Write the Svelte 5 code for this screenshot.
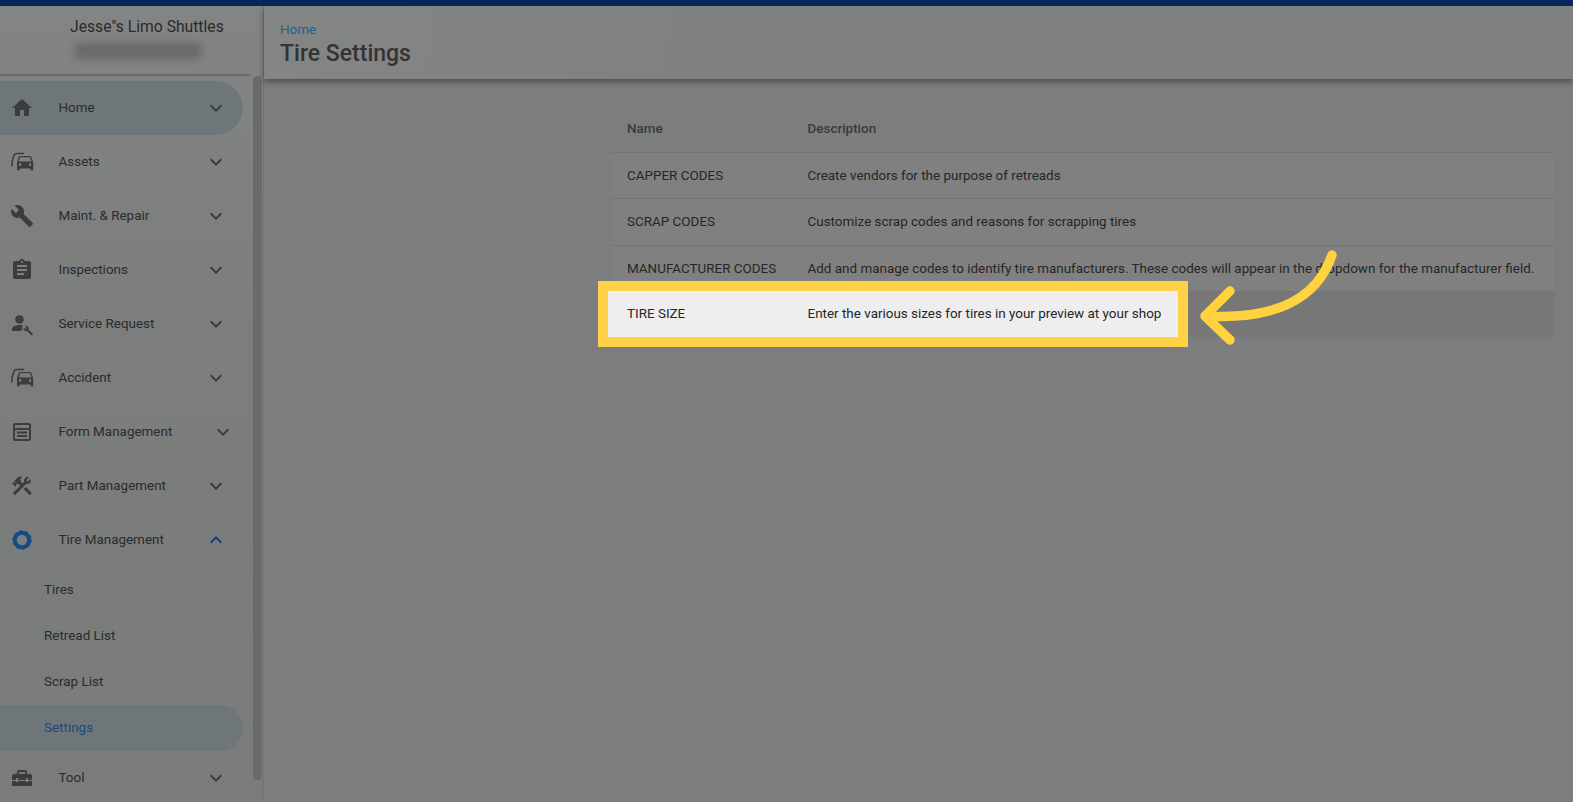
<script>
	const navTop = [
		{ label: "Home", icon: "home", active: true },
		{ label: "Assets", icon: "car" },
		{ label: "Maint. & Repair", icon: "wrench" },
		{ label: "Inspections", icon: "clipboard" },
		{ label: "Service Request", icon: "mechanic" },
		{ label: "Accident", icon: "car" },
		{ label: "Form Management", icon: "form", shifted: true },
		{ label: "Part Management", icon: "tools" }
	];
	const subItems = ["Tires", "Retread List", "Scrap List"];
	const rows = [
		["CAPPER CODES", "Create vendors for the purpose of retreads"],
		["SCRAP CODES", "Customize scrap codes and reasons for scrapping tires"],
		[
			"MANUFACTURER CODES",
			"Add and manage codes to identify tire manufacturers. These codes will appear in the dropdown for the manufacturer field."
		]
	];
</script>

{#snippet icon(name)}
	<svg class="icon" viewBox="0 0 24 24" fill="currentColor" aria-hidden="true">
		{#if name === "home"}
			<path d="M10 20v-6h4v6h5v-8h3L12 3 2 12h3v8z" />
		{:else if name === "car"}
			<g transform="translate(4.300 1.500) scale(.9)">
				<path d="M18.920 6.010C18.720 5.420 18.160 5 17.500 5h-11c-.66 0-1.210.42-1.420 1.010L3 12v8c0 .55.45 1 1 1h1c.55 0 1-.45 1-1v-1h12v1c0 .55.45 1 1 1h1c.55 0 1-.45 1-1v-8l-2.080-5.990zM6.500 16c-.83 0-1.500-.67-1.500-1.500S5.670 13 6.500 13s1.500.67 1.500 1.500S7.330 16 6.500 16zm11 0c-.83 0-1.500-.67-1.500-1.500s.67-1.500 1.500-1.500 1.500.67 1.500 1.500-.67 1.500-1.500 1.500zM5 11l1.500-4.500h11L19 11H5z" />
			</g>
			<path d="M2 16.500V12L3.500 6.500C4 4.500 5 3.500 7 3.500H14" fill="none" stroke="currentColor" stroke-width="1.500" />
		{:else if name === "wrench"}
			<path d="M22.700 19l-9.100-9.100c.9-2.300.4-5-1.500-6.900-2-2-5-2.400-7.400-1.300L9 6 6 9 1.600 4.700C.4 7.100.9 10.100 2.900 12.100c1.900 1.900 4.600 2.400 6.900 1.500l9.100 9.100c.4.4 1 .4 1.400 0l2.300-2.300c.5-.4.5-1.100.1-1.400z" />
		{:else if name === "clipboard"}
			<path d="M19 3h-4.180C14.400 1.840 13.300 1 12 1c-1.300 0-2.400.84-2.820 2H5c-1.100 0-2 .9-2 2v14c0 1.100.9 2 2 2h14c1.100 0 2-.9 2-2V5c0-1.100-.9-2-2-2zm-7 0c.55 0 1 .45 1 1s-.45 1-1 1-1-.45-1-1 .45-1 1-1zm2 14H7v-2h7v2zm3-4H7v-2h10v2zm0-4H7V7h10v2z" />
		{:else if name === "mechanic"}
			<circle cx="9.500" cy="7.500" r="4.300" />
			<path d="M2 19v-2c0-2.800 4.500-4 8-4 1 0 2 .1 3 .3-.9 1-1.300 2.600-.8 4.200l-1.500 1.500z" />
			<path d="M22.800 21.700l-4.200-4.200c.3-1 .1-2.100-.7-2.900-.8-.8-2-1-3-.6l1.800 1.800-1.300 1.300-1.800-1.800c-.4 1-.2 2.200.6 3 .8.800 1.900 1 2.900.7l4.200 4.200c.2.200.4.200.6 0l.9-.9c.2-.2.200-.4 0-.6z" />
		{:else if name === "form"}
			<path d="M19 3H5c-1.100 0-2 .9-2 2v14c0 1.100.9 2 2 2h14c1.100 0 2-.9 2-2V5c0-1.100-.9-2-2-2zM5 5h14v3H5zm14 14H5V10h14z" />
			<rect x="7" y="11.500" width="10" height="2" />
			<rect x="7" y="15" width="10" height="2" />
		{:else if name === "tools"}
			<path d="M13.783 15.172l2.121-2.121 5.996 5.996-2.121 2.121zM17.500 10c1.930 0 3.500-1.570 3.500-3.500 0-.58-.16-1.120-.41-1.600l-2.700 2.700-1.490-1.490 2.700-2.700c-.48-.25-1.020-.41-1.600-.41C15.570 3 14 4.570 14 6.500c0 .41.08.8.21 1.160l-1.850 1.850-1.780-1.780.71-.71-1.410-1.410L12 3.490c-1.170-1.170-3.070-1.170-4.240 0L4.220 7.030l1.410 1.410H2.810l-.71.71 3.540 3.540.71-.71V9.150l1.410 1.410.71-.71 1.780 1.780-7.410 7.410 2.120 2.120L16.340 9.790c.36.13.75.21 1.160.21z" />
		{:else if name === "toolbox"}
			<path d="M18 16h-2v-1H8v1H6v-1H2v5h20v-5h-4zm2-8h-3V6c0-1.100-.9-2-2-2H9c-1.100 0-2 .9-2 2v2H4c-1.100 0-2 .9-2 2v4h4v-2h2v2h8v-2h2v2h4v-4c0-1.100-.9-2-2-2zm-5 0H9V6h6v2z" />
		{:else if name === "tire"}
			<circle cx="12" cy="12" r="7.200" fill="none" stroke="currentColor" stroke-width="4" />
			<circle cx="12" cy="12" r="9.300" fill="none" stroke="currentColor" stroke-width="1" stroke-dasharray="3 2.840" />
		{/if}
	</svg>
{/snippet}

{#snippet chevron(up = false, shifted = false)}
	<svg class="chevron" class:up class:shifted viewBox="0 0 24 24" fill="currentColor" aria-hidden="true">
		<path d="M7.410 8.590L12 13.170l4.590-4.580L18 10l-6 6-6-6z" />
	</svg>
{/snippet}

<div class="topbar"></div>
<div class="page">
	<aside class="sidebar">
		<div class="brand">
			<div class="brand-name">Jesse"s Limo Shuttles</div>
			<div class="brand-blur"></div>
		</div>
		<div class="nav-wrap">
			<nav class="nav">
				{#each navTop as item}
					<div class="item" class:active={item.active}>
						{@render icon(item.icon)}
						<span class="label">{item.label}</span>
						{@render chevron(false, item.shifted)}
					</div>
				{/each}
				<div class="item open">
					{@render icon("tire")}
					<span class="label">Tire Management</span>
					{@render chevron(true)}
				</div>
				{#each subItems as sub}
					<div class="sub">{sub}</div>
				{/each}
				<div class="sub current">Settings</div>
				<div class="item">
					{@render icon("toolbox")}
					<span class="label">Tool</span>
					{@render chevron()}
				</div>
			</nav>
			<div class="scrollbar"></div>
		</div>
	</aside>

	<div class="content">
		<header class="header">
			<a class="crumb" href="#home">Home</a>
			<h1>Tire Settings</h1>
		</header>
		<main class="main">
			<div class="table">
				<div class="row head">
					<div class="name">Name</div>
					<div>Description</div>
				</div>
				{#each rows as [name, desc]}
					<div class="row">
						<div class="name">{name}</div>
						<div>{desc}</div>
					</div>
				{/each}
				<div class="row hovered">
					<div class="spot">
						<div class="name">TIRE SIZE</div>
						<div>Enter the various sizes for tires in your preview at your shop</div>
					</div>
				</div>
				<svg class="arrow" viewBox="0 0 140 100" aria-hidden="true">
					<path d="M131 5C116 50 72 70 4 66M29 41L4 66L29 90" />
				</svg>
			</div>
		</main>
	</div>
</div>

<style>
	:global(body) {
		margin: 0;
		background: #7c7d7e;
		font-family: Roboto, "Liberation Sans", sans-serif;
		overflow: hidden;
	}
	.topbar {
		height: 6px;
		background: #04265a;
	}
	.page {
		display: flex;
		height: 796px;
		overflow: hidden;
	}
	.sidebar {
		width: 263px;
		flex: none;
		background: linear-gradient(180deg, #838484 0, #7c7d7d 40%, #7a7c7c 100%);
		border-right: 1px solid #737474;
		color: #262626;
	}
	.brand {
		height: 68px;
		width: 250px;
		border-bottom: 2px solid #6b6b6b;
		box-sizing: content-box;
		position: relative;
	}
	.brand-name {
		padding: 11px 0 0 70px;
		font-size: 15.7px;
		line-height: 20px;
		color: #2a2a2a;
		white-space: nowrap;
	}
	.brand-blur {
		margin: 6px 0 0 74px;
		width: 128px;
		height: 16px;
		background: #686868;
		border-radius: 6px;
		filter: blur(4px);
	}
	.nav-wrap {
		display: flex;
		position: relative;
		margin-top: 5px;
	}
	.nav {
		width: 243px;
		flex: none;
	}
	.item {
		height: 54px;
		display: flex;
		align-items: center;
		font-size: 13.44px;
		color: #2b2b2b;
		position: relative;
	}
	.active,
	.current {
		background: #6f7679;
		border-radius: 0 27px 27px 0;
	}
	.icon {
		width: 24px;
		height: 24px;
		margin-left: 10px;
		flex: none;
		color: #3a3c3d;
	}
	.label {
		margin-left: 24.500px;
		padding-bottom: 2px;
		flex: 1;
	}
	.chevron {
		width: 24px;
		height: 24px;
		position: absolute;
		left: 204px;
		color: #3a3c3d;
	}
	.chevron.shifted {
		left: 211px;
	}
	.chevron.up {
		transform: rotate(180deg);
		color: #123f77;
	}
	.open .icon {
		color: #134b8a;
	}
	.sub {
		height: 46px;
		padding-left: 44px;
		font-size: 13.44px;
		line-height: 46px;
		color: #2b2b2b;
	}
	.current {
		color: #17497f;
		border-radius: 0 23px 23px 0;
	}
	.scrollbar {
		width: 9px;
		height: 704px;
		margin-left: 10px;
		margin-top: -5px;
		background: #696a6a;
		border-radius: 5px;
		flex: none;
	}
	.content {
		flex: 1;
		min-width: 0;
		display: flex;
		flex-direction: column;
	}
	.header {
		height: 73px;
		box-sizing: border-box;
		padding: 15px 16px 0;
		background: linear-gradient(100deg, #848585, #7f8080 40%);
		box-shadow: 0 3px 6px rgba(0, 0, 0, 0.38);
	}
	.crumb {
		display: block;
		font-size: 13.44px;
		line-height: 18px;
		color: #14678f;
		text-decoration: none;
	}
	h1 {
		margin: 1px 0 0;
		font-size: 23px;
		line-height: 28px;
		font-weight: 500;
		color: #333;
	}
	.main {
		padding: 33px 19px 0 347px;
	}
	.table {
		position: relative;
		color: #262626;
	}
	.row {
		display: flex;
		height: 46.330px;
		align-items: center;
		background: #808080;
		border-top: 1px solid #767676;
		box-sizing: border-box;
		font-size: 13.44px;
		white-space: nowrap;
	}
	.row.head {
		height: 40px;
		padding-bottom: 8px;
		background: transparent;
		border-top: 0;
		font-weight: 500;
		color: #3a3a3a;
	}
	.name {
		width: 180.500px;
		margin-left: 16px;
		flex: none;
	}
	.hovered {
		height: 46px;
		background: #777;
		border-top: 0;
		border-radius: 0 0 4px 4px;
	}
	.spot {
		display: flex;
		align-items: center;
		height: 46px;
		width: 570px;
		margin-left: -3px;
		flex: none;
		background: #eee;
		outline: 10px solid #ffd147;
		position: relative;
	}
	.spot .name {
		margin-left: 19px;
	}
	.arrow {
		position: absolute;
		left: 590px;
		top: 138px;
		width: 140px;
		height: 100px;
		overflow: visible;
		fill: none;
		stroke: #ffd23f;
		stroke-width: 9.500;
		stroke-linecap: round;
		stroke-linejoin: round;
	}
</style>
